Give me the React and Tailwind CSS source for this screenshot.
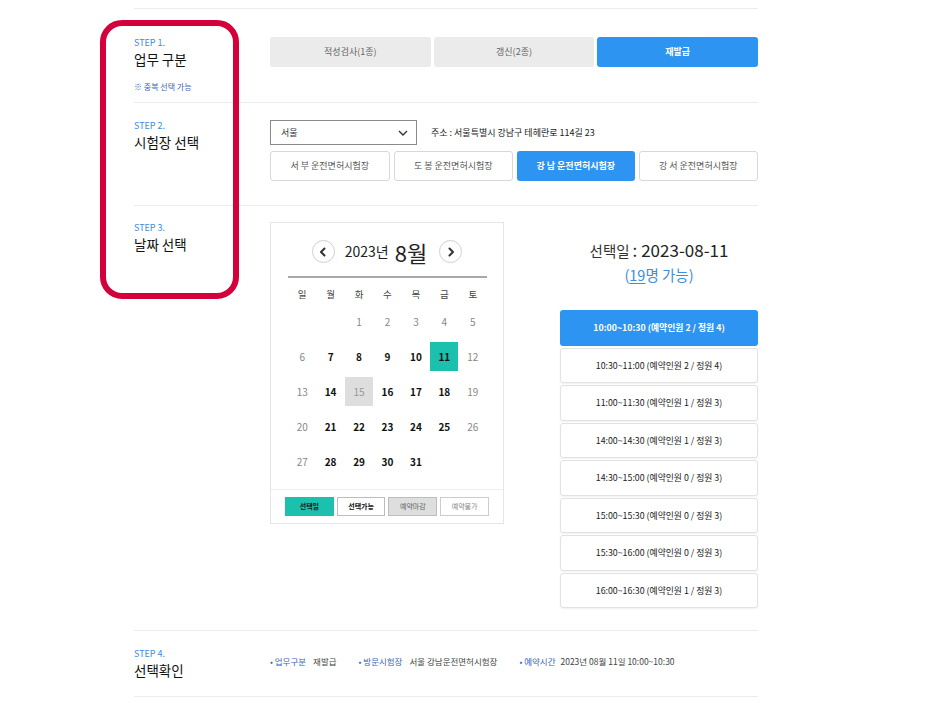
import React from "react";

function StepLabel({ n, title, note }) {
  return (
    <div className="w-[136px] shrink-0">
      <div className="text-[9px] leading-[12px] text-[#3d8de0]">STEP {n}.</div>
      <div className="mt-[1px] text-[13.5px] leading-[18px] text-[#111]">{title}</div>
      {note && <div className="mt-[13px] text-[8px] leading-[12px] text-[#3c66b8]">{note}</div>}
    </div>
  );
}

function Chevron({ dir }) {
  return (
    <svg width="10" height="10" viewBox="0 0 10 10">
      <polyline
        points={dir === "left" ? "6.5,1.5 3,5 6.5,8.5" : "3.5,1.5 7,5 3.5,8.5"}
        fill="none"
        stroke="#333"
        strokeWidth="2"
        strokeLinecap="round"
        strokeLinejoin="round"
      />
    </svg>
  );
}

const weeks = [
  [null, null, 1, 2, 3, 4, 5],
  [6, 7, 8, 9, 10, 11, 12],
  [13, 14, 15, 16, 17, 18, 19],
  [20, 21, 22, 23, 24, 25, 26],
  [27, 28, 29, 30, 31, null, null],
];

function Day({ d, col }) {
  if (d === null) return <div className="h-[29px]" />;
  let cls = "text-[#888] font-normal";
  if (d === 11) cls = "bg-[#1bc1ad] text-[#111] font-bold";
  else if (d === 15) cls = "bg-[#dedede] text-[#999] font-normal";
  else if (d > 5 && col !== 0 && col !== 6) cls = "text-[#111] font-bold";
  return (
    <div className="flex justify-center">
      <div className={"w-[28px] h-[29px] flex items-center justify-center text-[10px] " + cls}>{d}</div>
    </div>
  );
}

const slots = [
  ["10:00~10:30", 2, 4],
  ["10:30~11:00", 2, 4],
  ["11:00~11:30", 1, 3],
  ["14:00~14:30", 1, 3],
  ["14:30~15:00", 0, 3],
  ["15:00~15:30", 0, 3],
  ["15:30~16:00", 0, 3],
  ["16:00~16:30", 1, 3],
];

export default function App() {
  return (
    <div className="relative w-[939px] h-[703px] overflow-hidden bg-white font-['Noto_Sans_CJK_KR','Noto_Sans',sans-serif]">
      <div className="ml-[134px] w-[624px] pt-[8px]">
        {/* Section 1 */}
        <div className="flex h-[94px] border-t border-[#ececec] pt-[28px]">
          <StepLabel n={1} title="업무 구분" note="※ 중복 선택 가능" />
          <div className="flex flex-1 gap-[3px]">
            <div className="flex h-[30px] flex-1 items-center justify-center rounded-[3px] bg-[#ebebeb] text-[9px] text-[#666]">적성검사(1종)</div>
            <div className="flex h-[30px] flex-1 items-center justify-center rounded-[3px] bg-[#ebebeb] text-[9px] text-[#666]">갱신(2종)</div>
            <div className="flex h-[30px] flex-1 items-center justify-center rounded-[3px] bg-[#2e94f2] text-[9px] font-bold text-white">재발급</div>
          </div>
        </div>

        {/* Section 2 */}
        <div className="flex h-[103px] border-t border-[#ececec] pt-[17px]">
          <StepLabel n={2} title="시험장 선택" />
          <div className="flex-1">
            <div className="flex items-center">
              <div className="flex h-[25px] w-[147px] items-center justify-between border border-[#8a8a8a] pl-[10px] pr-[8px] text-[9px] text-[#333]">
                <span>서울</span>
                <svg width="10" height="6" viewBox="0 0 10 6">
                  <polyline points="1,1 5,5 9,1" fill="none" stroke="#333" strokeWidth="1.4" />
                </svg>
              </div>
              <div className="ml-[14px] text-[9px] text-[#222]">주소 : 서울특별시 강남구 테헤란로 114길 23</div>
            </div>
            <div className="mt-[6px] flex gap-[4px]">
              {["서 부 운전면허시험장", "도 봉 운전면허시험장", "강 남 운전면허시험장", "강 서 운전면허시험장"].map((t, i) => (
                <div
                  key={t}
                  className={
                    "flex h-[30px] flex-1 items-center justify-center rounded-[3px] text-[9px] " +
                    (i === 2
                      ? "bg-[#2e94f2] font-bold text-white"
                      : "border border-[#d8d8d8] bg-white text-[#555]")
                  }
                >
                  {t}
                </div>
              ))}
            </div>
          </div>
        </div>

        {/* Section 3 */}
        <div className="flex h-[425px] border-t border-[#ececec] pt-[16px]">
          <StepLabel n={3} title="날짜 선택" />
          <div className="flex flex-1 items-start">
            {/* calendar */}
            <div className="w-[234px] border border-[#e6e6e6] bg-white">
              <div className="flex h-[53px] items-center justify-center pt-[4px]">
                <div className="flex h-[23px] w-[23px] items-center justify-center rounded-full border border-[#cfcfcf]">
                  <Chevron dir="left" />
                </div>
                <div className="ml-[10px] flex items-center text-[#222]">
                  <span className="text-[14px]">2023년</span>
                  <span className="ml-[6px] text-[22px] leading-[26px]">8월</span>
                </div>
                <div className="ml-[12px] flex h-[23px] w-[23px] items-center justify-center rounded-full border border-[#cfcfcf]">
                  <Chevron dir="right" />
                </div>
              </div>
              <div className="ml-[17px] h-[2px] w-[199px] bg-[#a8a8a8]" />
              <div className="ml-[17px] mt-[5px] grid h-[22px] w-[199px] grid-cols-7 items-center text-center text-[9.5px] text-[#444]">
                {["일", "월", "화", "수", "목", "금", "토"].map((d) => (
                  <div key={d}>{d}</div>
                ))}
              </div>
              <div className="ml-[17px] mt-[2px] grid w-[199px] grid-cols-7 gap-y-[6px]">
                {weeks.map((w, wi) => w.map((d, ci) => <Day key={wi + "-" + ci} d={d} col={ci} />))}
              </div>
              <div className="mt-[13px] flex h-[34px] gap-[3px] border-t border-[#eeeeee] px-[14px] pt-[7px]">
                <div className="flex h-[19px] w-[49px] items-center justify-center bg-[#1bc1ad] text-[7px] font-bold text-[#1a1a1a]">선택일</div>
                <div className="flex h-[19px] w-[49px] items-center justify-center border border-[#bdbdbd] bg-white text-[7px] font-bold text-[#111]">선택가능</div>
                <div className="flex h-[19px] w-[49px] items-center justify-center border border-[#bdbdbd] bg-[#dedede] text-[7px] text-[#666]">예약마감</div>
                <div className="flex h-[19px] w-[49px] items-center justify-center border border-[#cccccc] bg-white text-[7px] text-[#888]">예약불가</div>
              </div>
            </div>

            {/* right panel */}
            <div className="ml-[56px] w-[198px]">
              <div className="mt-[16px] flex items-baseline justify-center leading-[24px] text-[#333]">
                <span className="text-[14.5px]">선택일</span>
                <span className="ml-[3px] text-[17px] text-[#222]">: 2023-08-11</span>
              </div>
              <div className="mt-[2px] text-center text-[14.5px] leading-[20px] text-[#3b8ee0]">
                (<span className="underline underline-offset-2">19</span>명 가능)
              </div>
              <div className="mt-[25px] flex flex-col gap-[2px]">
                {slots.map(([t, a, b], i) => (
                  <div
                    key={t}
                    className={
                      "flex h-[35.5px] items-center justify-center rounded-[3px] text-[8.8px] " +
                      (i === 0
                        ? "bg-[#2e94f2] font-bold text-white"
                        : "border border-[#e2e2e2] bg-white text-[#222] shadow-[0_1px_2px_rgba(0,0,0,0.06)]")
                    }
                  >
                    {t} (예약인원 {a} / 정원 {b})
                  </div>
                ))}
              </div>
            </div>
          </div>
        </div>

        {/* Section 4 */}
        <div className="flex h-[67px] border-t border-b border-[#ececec] pt-[17px]">
          <StepLabel n={4} title="선택확인" />
          <div className="flex h-[26px] items-center text-[8.5px]">
            <span className="text-[#3c66b8]">• 업무구분</span>
            <span className="ml-[7px] text-[#444]">재발급</span>
            <span className="ml-[22px] text-[#3c66b8]">• 방문시험장</span>
            <span className="ml-[7px] text-[#444]">서울 강남운전면허시험장</span>
            <span className="ml-[22px] text-[#3c66b8]">• 예약시간</span>
            <span className="ml-[5px] text-[#444]">2023년 08월 11일 10:00~10:30</span>
          </div>
        </div>
      </div>

      {/* annotation overlay */}
      <div className="pointer-events-none absolute left-[100px] top-[20px] h-[279px] w-[139px] rounded-[22px] border-[6px] border-[#d4003b]" />
    </div>
  );
}
